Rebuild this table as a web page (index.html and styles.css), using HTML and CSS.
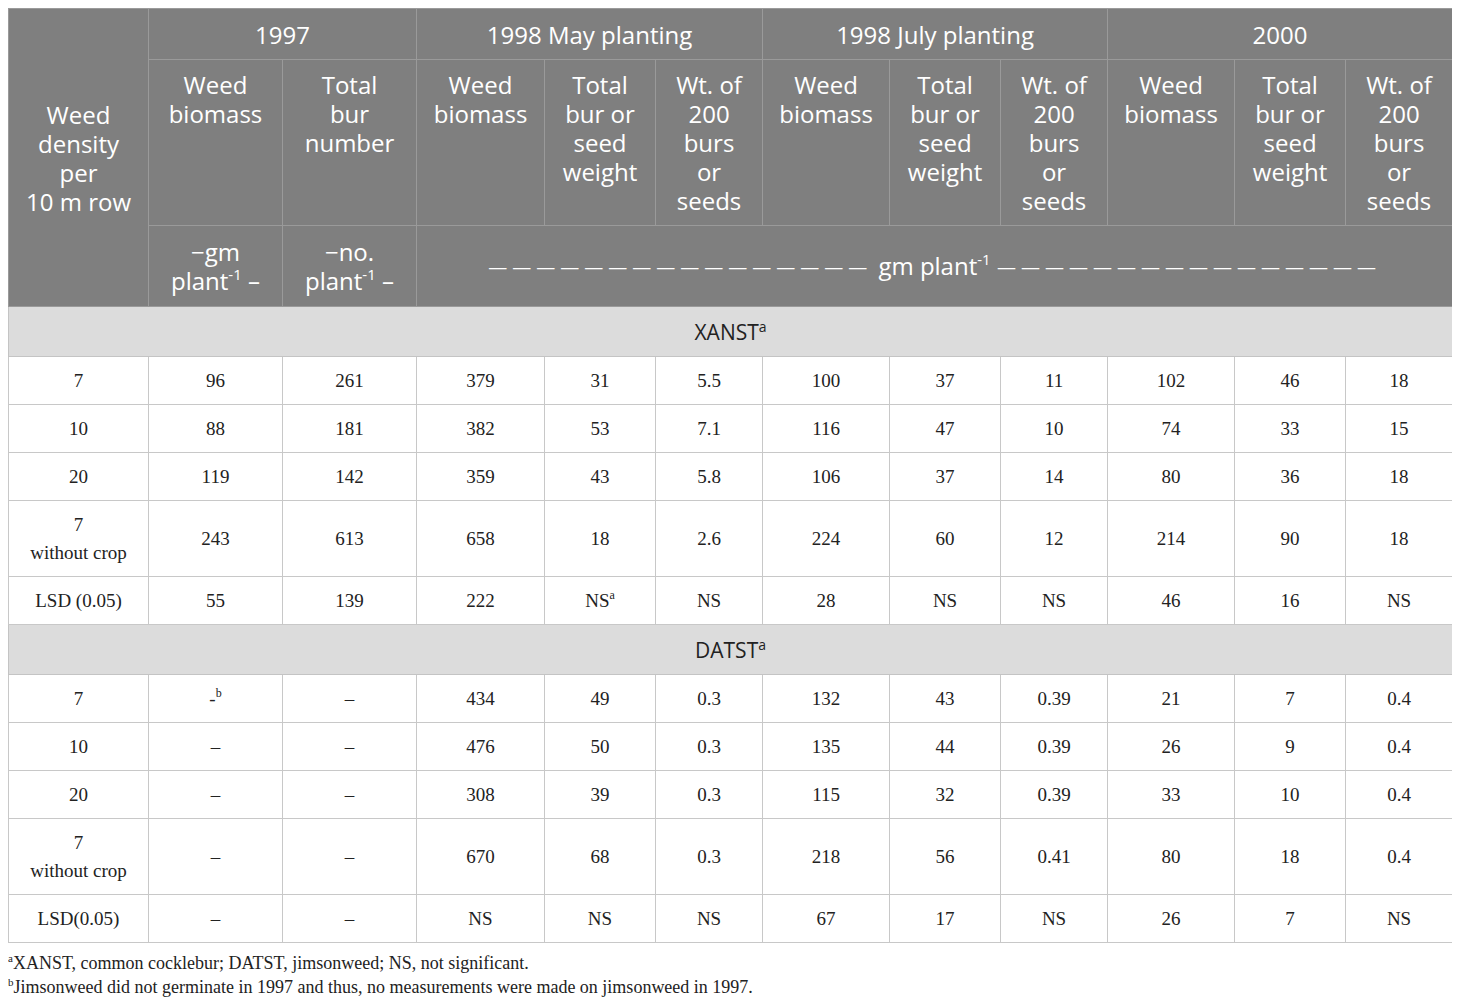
FILE: index.html
```html
<!DOCTYPE html>
<html lang="en">
  <head>
    <meta charset="UTF-8" />
    <title>Weed biomass table</title>
    <link rel="stylesheet" href="styles.css">
  </head>
  <body>
    <table class="data">
      <colgroup>
        <col style="width:140px"><col style="width:134px"><col style="width:134px">
        <col style="width:128px"><col style="width:111px"><col style="width:107px">
        <col style="width:127px"><col style="width:111px"><col style="width:107px">
        <col style="width:127px"><col style="width:111px"><col style="width:107px">
      </colgroup>
      <thead>
        <tr class="h-year">
          <th rowspan="3" class="h-lead">Weed<br>density<br>per<br>10 m row</th>
          <th colspan="2">1997</th>
          <th colspan="3">1998 May planting</th>
          <th colspan="3">1998 July planting</th>
          <th colspan="3">2000</th>
        </tr>
        <tr class="h-col">
          <th>Weed<br>biomass</th>
          <th>Total<br>bur<br>number</th>
          <th>Weed<br>biomass</th>
          <th>Total<br>bur or<br>seed<br>weight</th>
          <th>Wt. of<br>200<br>burs<br>or<br>seeds</th>
          <th>Weed<br>biomass</th>
          <th>Total<br>bur or<br>seed<br>weight</th>
          <th>Wt. of<br>200<br>burs<br>or<br>seeds</th>
          <th>Weed<br>biomass</th>
          <th>Total<br>bur or<br>seed<br>weight</th>
          <th>Wt. of<br>200<br>burs<br>or<br>seeds</th>
        </tr>
        <tr class="h-unit">
          <th>&minus;gm<br><span class="nw">plant<sup>-1</sup> &ndash;</span></th>
          <th>&minus;no.<br><span class="nw">plant<sup>-1</sup> &ndash;</span></th>
          <th colspan="9"><span class="dash">————————————————</span> gm plant<sup>-1</sup> <span class="dash">————————————————</span></th>
        </tr>
      </thead>
      <tbody>
        <tr class="section"><td colspan="12">XANST<sup>a</sup></td></tr>
        <tr><td>7</td><td>96</td><td>261</td><td>379</td><td>31</td><td>5.5</td><td>100</td><td>37</td><td>11</td><td>102</td><td>46</td><td>18</td></tr>
        <tr><td>10</td><td>88</td><td>181</td><td>382</td><td>53</td><td>7.1</td><td>116</td><td>47</td><td>10</td><td>74</td><td>33</td><td>15</td></tr>
        <tr><td>20</td><td>119</td><td>142</td><td>359</td><td>43</td><td>5.8</td><td>106</td><td>37</td><td>14</td><td>80</td><td>36</td><td>18</td></tr>
        <tr class="tall"><td>7<br>without crop</td><td>243</td><td>613</td><td>658</td><td>18</td><td>2.6</td><td>224</td><td>60</td><td>12</td><td>214</td><td>90</td><td>18</td></tr>
        <tr><td>LSD (0.05)</td><td>55</td><td>139</td><td>222</td><td>NS<sup>a</sup></td><td>NS</td><td>28</td><td>NS</td><td>NS</td><td>46</td><td>16</td><td>NS</td></tr>
        <tr class="section"><td colspan="12">DATST<sup>a</sup></td></tr>
        <tr><td>7</td><td>-<sup>b</sup></td><td>&ndash;</td><td>434</td><td>49</td><td>0.3</td><td>132</td><td>43</td><td>0.39</td><td>21</td><td>7</td><td>0.4</td></tr>
        <tr><td>10</td><td>&ndash;</td><td>&ndash;</td><td>476</td><td>50</td><td>0.3</td><td>135</td><td>44</td><td>0.39</td><td>26</td><td>9</td><td>0.4</td></tr>
        <tr><td>20</td><td>&ndash;</td><td>&ndash;</td><td>308</td><td>39</td><td>0.3</td><td>115</td><td>32</td><td>0.39</td><td>33</td><td>10</td><td>0.4</td></tr>
        <tr class="tall"><td>7<br>without crop</td><td>&ndash;</td><td>&ndash;</td><td>670</td><td>68</td><td>0.3</td><td>218</td><td>56</td><td>0.41</td><td>80</td><td>18</td><td>0.4</td></tr>
        <tr><td>LSD(0.05)</td><td>&ndash;</td><td>&ndash;</td><td>NS</td><td>NS</td><td>NS</td><td>67</td><td>17</td><td>NS</td><td>26</td><td>7</td><td>NS</td></tr>
      </tbody>
    </table>
    <div class="notes">
      <p><sup>a</sup>XANST, common cocklebur; DATST, jimsonweed; NS, not significant.</p>
      <p><sup>b</sup>Jimsonweed did not germinate in 1997 and thus, no measurements were made on jimsonweed in 1997.</p>
    </div>
  </body>
</html>
```

FILE: styles.css
```css
body {
  margin: 8px;
  background: #fff;
  color: #222;
  font-family: "Liberation Serif", serif;
}

.data {
  width: 1444px;
  table-layout: fixed;
  border-collapse: collapse;
  border: 1px solid #c4c4c4;
}

.data th {
  background: #7f7f7f;
  color: #fff;
  font-family: "Open Sans", sans-serif;
  font-weight: normal;
  font-size: 24px;
  line-height: 29px;
  border: 1px solid #9a9a9a;
  padding: 0 4px;
  text-align: center;
  white-space: nowrap;
}

.data th sup {
  font-size: 15px;
  line-height: 0;
  vertical-align: 10px;
}

.h-year {
  height: 51px;
}

.h-year th.h-lead {
  vertical-align: middle;
}

.h-col {
  height: 166px;
}

.h-col th {
  vertical-align: top;
  padding-top: 10px;
}

.h-unit {
  height: 81px;
}

.nw {
  white-space: nowrap;
}

.dash {
  font-size: 19px;
  letter-spacing: 5px;
  vertical-align: 1px;
}

.data td {
  border: 1px solid #c8c8c8;
  text-align: center;
  font-size: 19px;
  line-height: 28px;
  height: 47px;
  padding: 0 4px;
  color: #222;
}

.data td sup {
  font-size: 12px;
  line-height: 0;
  vertical-align: 8px;
}

.data tr.tall td {
  height: 75px;
}

.data tr.section td {
  background: #dcdcdc;
  font-family: "Open Sans", sans-serif;
  font-size: 21px;
  height: 49px;
  border-color: #c4c4c4;
}

.data tr.section td sup {
  font-size: 14px;
}

.notes {
  margin-top: 8px;
  font-size: 18px;
  line-height: 24px;
  color: #222;
}

.notes p {
  margin: 0;
}

.notes sup {
  font-size: 11px;
  line-height: 0;
  vertical-align: 7px;
}
```
